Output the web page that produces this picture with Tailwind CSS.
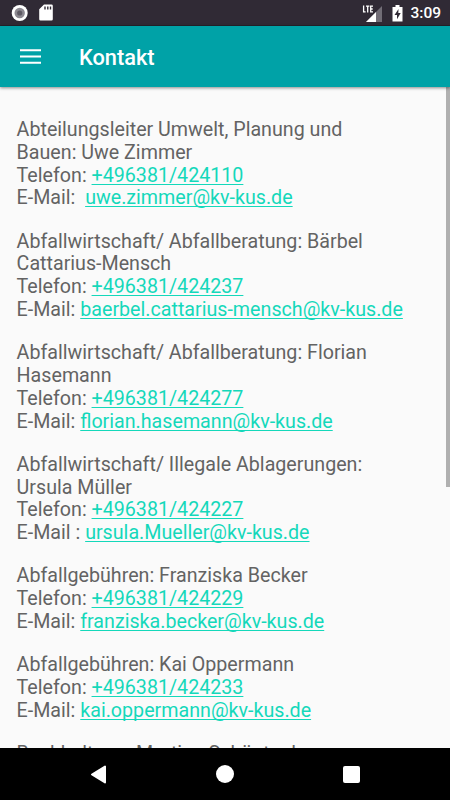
<!DOCTYPE html>
<html lang="de">
<head>
<meta charset="utf-8">
<title>Kontakt</title>
<script src="https://cdn.jsdelivr.net/npm/@tailwindcss/browser@4"></script>
</head>
<body class="w-[450px] h-[800px] overflow-hidden bg-[#fafafa] font-[Roboto,sans-serif] flex flex-col">
<div class="h-[26px] shrink-0 bg-[#302a35] border-b border-[#25232c] flex items-center pl-[11px] pr-[9px] text-white">
  <svg class="w-[18px] h-[18px]" viewBox="0 0 18 18"><circle cx="8.7" cy="9" r="8" fill="#fff"/><circle cx="8.7" cy="9" r="5.2" fill="#8c8991"/><circle cx="8.7" cy="9" r="2.6" fill="#5e5a64"/></svg>
  <svg class="w-[14px] h-[17px] ml-[10px]" viewBox="0 0 14 17"><path d="M5 .5h7.5a1.3 1.3 0 0 1 1.3 1.3v13.4a1.3 1.3 0 0 1-1.3 1.3h-11A1.3 1.3 0 0 1 .2 15.200V5.300z" fill="#fff"/><path d="M6 2.500v3M8.800 2.500v3M11.500 2.500v3" stroke="#302a35" stroke-width="1.400"/></svg>
  <div class="flex-1"></div>
  <svg class="w-[21px] h-[18px] mt-[2px]" viewBox="0 0 21 18"><path d="M20 1v16H4z" fill="#716d76"/><path d="M14 7v10H4z" fill="#fff"/><path d="M0 0h11v9H0z" fill="#302a35"/><path d="M1.600 .500v6.400h2M4 1.200h3.400M5.700 1v6.500M11 1.200H8.700v5.700H11M8.700 4h2" fill="none" stroke="#fff" stroke-width="1.300"/></svg>
  <svg class="w-[11px] h-[17px] ml-[9px] mt-[1px]" viewBox="0 0 11 17"><path d="M3.500 0h4v2H10.500v14.500H.5V2h3z" fill="#fff"/><path d="M6.500 4L2.500 10h2.500v4.200L8.700 8H6.300z" fill="#302a35"/></svg>
  <span class="ml-[7px] mt-[3px] text-[15.500px] font-medium leading-none">3:09</span>
</div>
<header class="h-[61px] shrink-0 bg-[#00a2a7] flex items-center pl-5 text-white shadow-[0_1px_3px_rgba(0,0,0,0.45)] z-10">
  <svg class="w-[21px] h-[15px]" viewBox="0 0 21 15"><path d="M0 1.300h21M0 7.500h21M0 13.700h21" stroke="#fff" stroke-width="2"/></svg>
  <h1 class="ml-[38px] mt-[2px] text-[21.800px] font-medium leading-none">Kontakt</h1>
</header>
<main class="flex-1 min-h-0 overflow-hidden flex justify-between">
  <div class="pl-[16.600px] pt-[32px] text-[19.660px] leading-[22.800px] text-[#636363] whitespace-pre flex flex-col gap-[20.400px] [&_a]:text-[#14d8ba] [&_a]:underline [&_a]:decoration-1 [&_a]:underline-offset-2 [&_a]:[text-decoration-skip-ink:none]">
<p>Abteilungsleiter Umwelt, Planung und
Bauen: Uwe Zimmer
Telefon: <a>+496381/424110</a>
E-Mail:  <a>uwe.zimmer@kv-kus.de</a></p>
<p>Abfallwirtschaft/ Abfallberatung: Bärbel
Cattarius-Mensch
Telefon: <a>+496381/424237</a>
E-Mail: <a>baerbel.cattarius-mensch@kv-kus.de</a></p>
<p>Abfallwirtschaft/ Abfallberatung: Florian
Hasemann
Telefon: <a>+496381/424277</a>
E-Mail: <a>florian.hasemann@kv-kus.de</a></p>
<p>Abfallwirtschaft/ Illegale Ablagerungen:
Ursula Müller
Telefon: <a>+496381/424227</a>
E-Mail : <a>ursula.Mueller@kv-kus.de</a></p>
<p>Abfallgebühren: Franziska Becker
Telefon: <a>+496381/424229</a>
E-Mail: <a>franziska.becker@kv-kus.de</a></p>
<p>Abfallgebühren: Kai Oppermann
Telefon: <a>+496381/424233</a>
E-Mail: <a>kai.oppermann@kv-kus.de</a></p>
<p>Buchhaltung: Martina Schöntaul</p>
  </div>
  <div class="w-[4px] h-[400px] shrink-0 bg-[#b0b0b0]"></div>
</main>
<nav class="h-[52px] shrink-0 bg-black flex items-center pl-[90px]">
  <svg class="w-[17px] h-[19px]" viewBox="0 0 17 19"><path d="M15 1.500v16L2 9.500z" fill="#fff" stroke="#fff" stroke-width="2" stroke-linejoin="round"/></svg>
  <div class="ml-[109px] size-[18px] rounded-full bg-white"></div>
  <div class="ml-[109px] size-[17px] rounded-[2px] bg-white"></div>
</nav>
</body>
</html>
